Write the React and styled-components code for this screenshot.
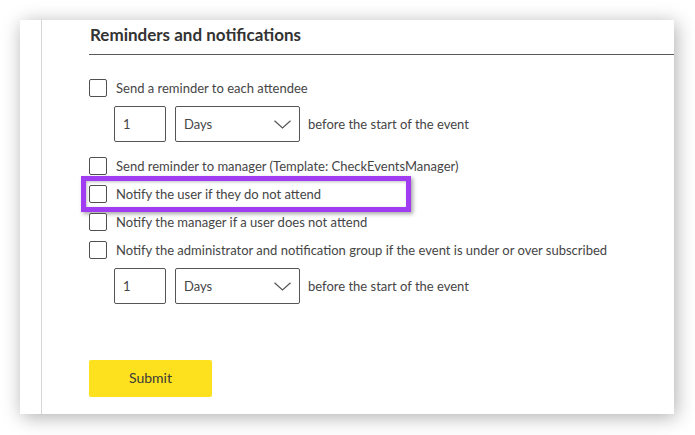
import React from "react";
import styled, { createGlobalStyle } from "styled-components";

const GlobalStyle = createGlobalStyle`
  html, body { margin: 0; padding: 0; background: #ffffff; }
  body { font-family: Lato, "Open Sans", "Liberation Sans", sans-serif; }
  *, *::before, *::after { box-sizing: border-box; }
`;

const Page = styled.div`
  width: 695px;
  height: 435px;
  padding: 20px 21px 21px 20px;
  background: #ffffff;
  overflow: hidden;
`;

const Card = styled.div`
  display: flex;
  height: 394px;
  background: #ffffff;
  box-shadow: 2px 3px 18px rgba(0, 0, 0, 0.32);
`;

const Gutter = styled.div`
  width: 22px;
  flex: none;
  border-right: 1px solid #d6d6d6;
`;

const Content = styled.div`
  flex: 1;
  padding: 5px 0 0 47px;
  display: flex;
  flex-direction: column;
`;

const Heading = styled.h2`
  margin: 0;
  font-size: 17px;
  line-height: 20px;
  font-weight: 700;
  color: #333333;
  padding: 0 0 9px 1px;
  border-bottom: 1px solid #5a5a5a;
`;

const Options = styled.div`
  display: flex;
  flex-direction: column;
  margin-top: 24px;
`;

const CheckRow = styled.label`
  position: relative;
  display: flex;
  align-items: center;
  gap: 9px;
  height: 18px;
  margin-top: ${(p) => p.$gap || 0}px;
  font-size: 13px;
  color: #454545;
  white-space: nowrap;

  ${(p) =>
    p.$highlight &&
    `
    &::after {
      content: "";
      position: absolute;
      left: -8px;
      top: -9px;
      width: 330px;
      height: 36px;
      border: 5px solid #a03cf2;
      box-shadow: 2px 2px 4px rgba(0, 0, 0, 0.35), inset 1px 1px 3px rgba(0, 0, 0, 0.25);
      pointer-events: none;
    }
  `}
`;

const Box = styled.span`
  width: 18px;
  height: 18px;
  flex: none;
  border: 1px solid #505050;
  border-radius: 2px;
  background: #ffffff;
`;

const TimingRow = styled.div`
  display: flex;
  align-items: center;
  height: 36px;
  margin: 9px 0 0 25px;
  font-size: 13px;
  color: #454545;
`;

const NumberInput = styled.input`
  width: 52px;
  height: 36px;
  border: 1px solid #555555;
  border-radius: 2px;
  padding: 0 8px;
  font: inherit;
  font-size: 13px;
  color: #454545;
  background: #ffffff;
  outline: none;
`;

const SelectBox = styled.div`
  width: 125px;
  height: 36px;
  margin: 0 8px 0 9px;
  border: 1px solid #555555;
  border-radius: 2px;
  padding: 0 8px;
  display: flex;
  align-items: center;
  justify-content: space-between;
  color: #454545;
`;

const Submit = styled.button`
  width: 123px;
  height: 37px;
  margin-top: 56px;
  padding: 0 0 3px;
  border: none;
  border-radius: 2px;
  background: #fde11f;
  color: #3a3a3a;
  font-family: Lato, "Open Sans", "Liberation Sans", sans-serif;
  font-size: 14px;
  cursor: pointer;
`;

const Chevron = () => (
  <svg width="17" height="9" viewBox="0 0 17 9" fill="none">
    <polyline points="0.5,0.8 8.5,8 16.5,0.8" stroke="#555" strokeWidth="1.2" />
  </svg>
);

const Timing = () => (
  <TimingRow>
    <NumberInput defaultValue="1" />
    <SelectBox>
      <span>Days</span>
      <Chevron />
    </SelectBox>
    <span>before the start of the event</span>
  </TimingRow>
);

export default function App() {
  return (
    <>
      <GlobalStyle />
      <Page>
        <Card>
          <Gutter />
          <Content>
            <Heading>Reminders and notifications</Heading>
            <Options>
              <CheckRow>
                <Box />
                Send a reminder to each attendee
              </CheckRow>
              <Timing />
              <CheckRow $gap={15}>
                <Box />
                Send reminder to manager (Template: CheckEventsManager)
              </CheckRow>
              <CheckRow $gap={10} $highlight>
                <Box />
                Notify the user if they do not attend
              </CheckRow>
              <CheckRow $gap={10}>
                <Box />
                Notify the manager if a user does not attend
              </CheckRow>
              <CheckRow $gap={10}>
                <Box />
                Notify the administrator and notification group if the event is under or over subscribed
              </CheckRow>
              <Timing />
            </Options>
            <Submit>Submit</Submit>
          </Content>
        </Card>
      </Page>
    </>
  );
}
